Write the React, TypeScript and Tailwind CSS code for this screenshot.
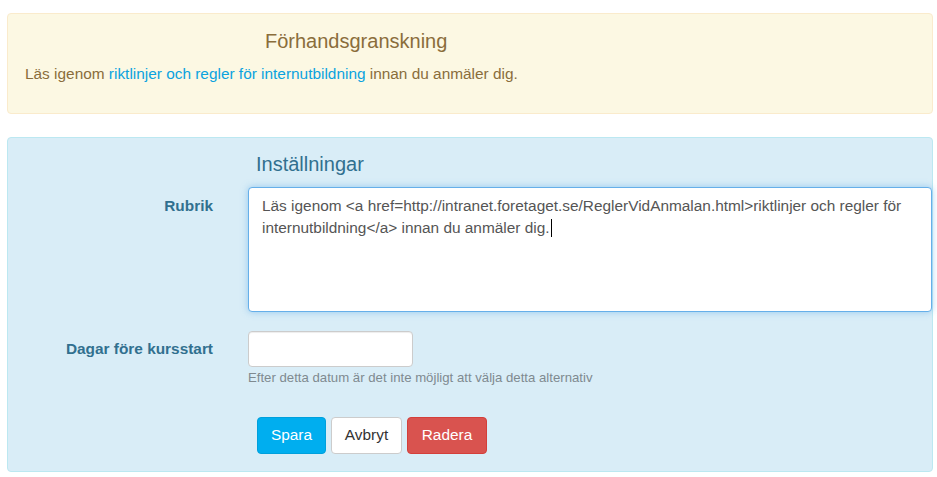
import React from 'react';

const font = "font-['Liberation_Sans',Arial,sans-serif]";

const App: React.FC = () => {
  return (
    <div className={`${font} w-[937px] h-[477px] bg-white pt-[13px] pl-[7px]`}>
      {/* Preview panel */}
      <div className="w-[926px] h-[101px] bg-[#fcf8e3] border border-[#faebcc] rounded-[4px] pt-[16px] px-[17px]">
        <h3 className="pl-[240px] text-[20px] leading-[22px] text-[#8a6d3b]">Förhandsgranskning</h3>
        <p className="mt-[11px] text-[15.4px] leading-[22px] text-[#8a6d3b]">
          Läs igenom <a className="text-[#0ba3df]">riktlinjer och regler för internutbildning</a> innan du anmäler dig.
        </p>
      </div>

      {/* Settings panel */}
      <div className="mt-[23px] w-[926px] h-[335px] bg-[#d9edf7] border border-[#bce8f1] rounded-[4px] pt-[15px]">
        <h3 className="pl-[248px] text-[20px] leading-[22px] text-[#31708f]">Inställningar</h3>

        <div className="mt-[12px] flex">
          <label className="w-[205px] shrink-0 pt-[8px] text-right text-[15.4px] leading-[22px] font-bold text-[#31708f]">
            Rubrik
          </label>
          <div className="ml-[35px] flex-1">
            <div className="h-[125px] bg-white border border-[#66afe9] rounded-[4px] shadow-[0_0_7px_rgba(102,175,233,0.6)] pt-[7px] px-[13px] text-[15.4px] leading-[22px] text-[#555]">
              Läs igenom &lt;a href=http://intranet.foretaget.se/ReglerVidAnmalan.html&gt;riktlinjer och regler för
              <br />
              internutbildning&lt;/a&gt; innan du anmäler dig.
              <span className="inline-block align-[-4px] ml-[1px] w-px h-[18px] bg-black" />
            </div>
          </div>
        </div>

        <div className="mt-[19px] flex">
          <label className="w-[205px] shrink-0 pt-[7px] text-right text-[15.4px] leading-[22px] font-bold text-[#31708f]">
            Dagar före kursstart
          </label>
          <div className="ml-[35px] flex-1">
            <input
              type="text"
              className="block w-[165px] h-[36px] bg-white border border-[#ccc] rounded-[4px] shadow-[inset_0_1px_1px_rgba(0,0,0,0.075)] px-[13px] text-[15.4px] text-[#555] outline-none"
            />
            <p className="mt-[1.5px] text-[13.2px] leading-[18px] text-[#7f8a90]">
              Efter detta datum är det inte möjligt att välja detta alternativ
            </p>
          </div>
        </div>

        <div className="mt-[30px] pl-[249px] flex gap-[5px]">
          <button className="w-[69px] h-[37px] rounded-[4px] bg-[#00aeef] border border-[#00a0dc] text-white text-[15.4px]">
            Spara
          </button>
          <button className="w-[71px] h-[37px] rounded-[4px] bg-white border border-[#ccc] text-[#333] text-[15.4px]">
            Avbryt
          </button>
          <button className="w-[80px] h-[37px] rounded-[4px] bg-[#d9534f] border border-[#d43f3a] text-white text-[15.4px]">
            Radera
          </button>
        </div>
      </div>
    </div>
  );
};

export default App;
